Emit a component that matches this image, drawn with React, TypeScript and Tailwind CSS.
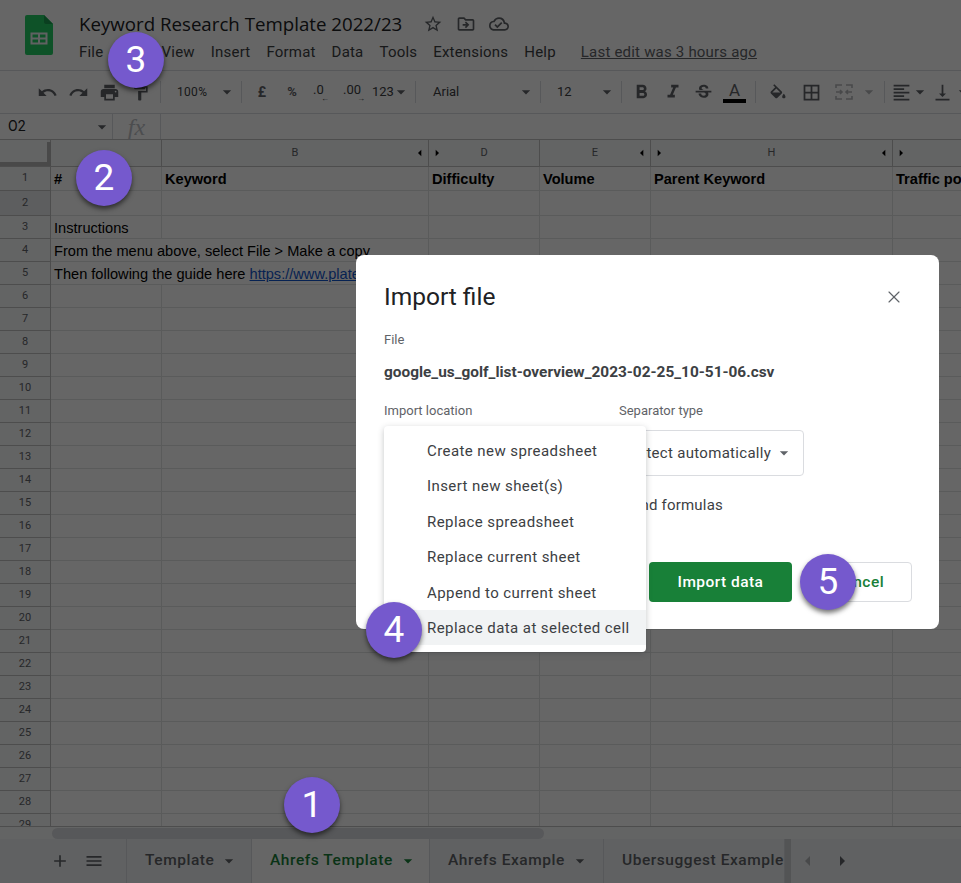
import type { ReactNode } from "react";
import { X } from "lucide-react";
import {
  MdAdd,
  MdArrowDropDown,
  MdArrowLeft,
  MdArrowRight,
  MdBorderAll,
  MdFormatAlignLeft,
  MdFormatBold,
  MdFormatItalic,
  MdFormatPaint,
  MdMenu,
  MdOutlineCloudDone,
  MdOutlineDriveFileMove,
  MdPrint,
  MdRedo,
  MdStarBorder,
  MdStrikethroughS,
  MdUndo,
  MdVerticalAlignBottom,
} from "react-icons/md";

const menus = ["File", "Edit", "View", "Insert", "Format", "Data", "Tools", "Extensions", "Help"];
const importOptions = [
  "Create new spreadsheet",
  "Insert new sheet(s)",
  "Replace spreadsheet",
  "Replace current sheet",
  "Append to current sheet",
  "Replace data at selected cell",
];
const gridCols = "grid grid-cols-[51px_111px_267px_111px_111px_242px_69px]";
const rowNumbers = Array.from({ length: 24 }, (_, i) => i + 6);

const SheetsLogo = () => (
  <svg width="28" height="40" viewBox="0 0 28 40">
    <path d="M2 0h17l9 9v29a2 2 0 0 1-2 2H2a2 2 0 0 1-2-2V2a2 2 0 0 1 2-2z" fill="#25cd64" />
    <path d="M19 0l9 9h-7a2 2 0 0 1-2-2z" fill="#1b9d50" />
    <path d="M5.5 17.5h17v12h-17zM7.5 19.5v3h5.5v-3zM15 19.5v3h5.5v-3zM7.5 24.5v3h5.5v-3zM15 24.5v3h5.5v-3z" fill="#f1f3f4" fillRule="evenodd" />
  </svg>
);

const MergeIcon = () => (
  <svg width="18" height="18" viewBox="0 0 18 18" fill="none" stroke="#b5b7ba" strokeWidth="1.6">
    <path d="M1 5V2h6M11 2h6v3M1 13v3h6M11 16h6v-3M1 9h5M17 9h-5M5 7l2 2-2 2M13 7l-2 2 2 2" />
  </svg>
);

const FillIcon = () => (
  <svg width="20" height="17" viewBox="0 0 24 20" fill="currentColor">
    <path d="M16.56 8.94L7.62 0 6.21 1.41l2.38 2.38-5.15 5.15c-.59.59-.59 1.54 0 2.12l5.5 5.5c.29.29.68.44 1.06.44s.77-.15 1.06-.44l5.5-5.5c.59-.58.59-1.53 0-2.12zM5.21 10L10 5.21 14.79 10H5.21zM19 11.5s-2 2.17-2 3.5c0 1.1.9 2 2 2s2-.9 2-2c0-1.33-2-3.5-2-3.5z" />
  </svg>
);

const Tool = ({ w = "w-[31px]", children }: { w?: string; children: ReactNode }) => (
  <div className={`${w} flex items-center justify-center text-[#5f6368] shrink-0`}>{children}</div>
);

const Sep = () => <div className="w-px h-[22px] bg-[#dadce0] shrink-0" />;

const Caret = ({ className = "" }: { className?: string }) => (
  <MdArrowDropDown size={20} className={`text-[#5f6368] shrink-0 ${className}`} />
);

const Toolbar = () => (
  <div className="h-[43px] flex items-center pl-[32px] border-b border-[#dadce0] bg-white shrink-0 overflow-hidden *:shrink-0 font-['Roboto',sans-serif] text-[12px] text-[#3c4043]">
    <Tool><MdUndo size={21} /></Tool>
    <Tool><MdRedo size={21} /></Tool>
    <Tool><MdPrint size={21} /></Tool>
    <Tool><MdFormatPaint size={19} /></Tool>
    <div className="w-[4px]" />
    <Sep />
    <div className="w-[80px] flex items-center pl-[16px]">
      <span className="tracking-[0.3px]">100%</span>
      <Caret className="ml-auto mr-[4px]" />
    </div>
    <Sep />
    <div className="w-[40px] text-center font-bold text-[14px] text-[#5f6368]">£</div>
    <div className="w-[20px] text-center font-bold text-[13px] text-[#5f6368]">%</div>
    <div className="w-[34px] pl-[11px] text-[13px] leading-none">
      .0
      <div className="text-[8px] leading-[6px] pl-[8px]">←</div>
    </div>
    <div className="w-[30px] pl-[7px] text-[13px] leading-none">
      .00
      <div className="text-[8px] leading-[6px] pl-[14px]">→</div>
    </div>
    <div className="w-[43px] flex items-center pl-[6px] text-[13px]">
      <span>123</span>
      <Caret className="-ml-[3px]" />
    </div>
    <div className="w-[6px]" />
    <Sep />
    <div className="w-[124px] flex items-center pl-[17px] text-[13px]">
      <span>Arial</span>
      <Caret className="ml-auto mr-[4px]" />
    </div>
    <Sep />
    <div className="w-[80px] flex items-center pl-[16px] text-[13px]">
      <span>12</span>
      <Caret className="ml-auto mr-[4px]" />
    </div>
    <Sep />
    <div className="w-[4px]" />
    <Tool><MdFormatBold size={23} /></Tool>
    <Tool><MdFormatItalic size={22} /></Tool>
    <Tool><MdStrikethroughS size={21} /></Tool>
    <div className="w-[31px] flex flex-col items-center">
      <span className="text-[17px] leading-[18px] text-[#5f6368]">A</span>
      <div className="w-[23px] h-[4px] bg-black" />
    </div>
    <div className="w-[5px]" />
    <Sep />
    <div className="w-[4px]" />
    <Tool w="w-[36px]"><FillIcon /></Tool>
    <Tool><MdBorderAll size={21} /></Tool>
    <Tool w="w-[34px]"><MergeIcon /></Tool>
    <Caret className="!text-[#b5b7ba] -ml-[2px]" />
    <div className="w-[5px]" />
    <Sep />
    <div className="w-[4px]" />
    <Tool w="w-[24px]"><MdFormatAlignLeft size={21} /></Tool>
    <Caret className="-ml-[3px]" />
    <Tool w="w-[24px]"><MdVerticalAlignBottom size={21} /></Tool>
    <Caret className="-ml-[1px]" />
  </div>
);

const ColHead = ({ label, left, right }: { label: string; left?: boolean; right?: boolean }) => (
  <div className="relative flex items-center justify-center border-r border-[#c0c0c0] text-[11px] text-[#5f6368] font-['Roboto',sans-serif]">
    {left && <MdArrowRight size={16} className="absolute left-0 text-black" />}
    {label}
    {right && <MdArrowLeft size={16} className="absolute right-0 text-black" />}
  </div>
);

const RowNum = ({ n, active }: { n: number; active?: boolean }) => (
  <div className={`flex items-center justify-center border-r border-b border-[#c0c0c0] text-[11px] text-[#5f6368] font-['Roboto',sans-serif] ${active ? "bg-[#e8eaed]" : "bg-[#f8f9fa]"}`}>
    {n}
  </div>
);

const Cell = ({ children, bold, span }: { children?: ReactNode; bold?: boolean; span?: string }) => (
  <div className={`flex items-center pl-[3px] border-r border-b border-[#e2e3e3] whitespace-nowrap overflow-hidden text-[14.6px] text-black font-['Liberation_Sans',sans-serif] ${bold ? "font-bold pt-[2px]" : "pt-[4px]"} ${span ?? ""}`}>
    {children}
  </div>
);

const emptyCells = (count: number) => Array.from({ length: count }, (_, i) => <Cell key={i} />);

const Grid = () => (
  <div className="flex-1 overflow-hidden bg-white">
    <div className={`${gridCols} h-[27px] bg-[#f8f9fa] border-b border-[#c0c0c0] relative`}>
      <div className="border-r border-[#c0c0c0] relative">
        <div className="absolute right-[-1px] top-[2px] bottom-0 w-[4px] bg-[#b7b7b7]" />
        <div className="absolute left-0 right-[-1px] bottom-0 h-[4px] bg-[#b7b7b7]" />
      </div>
      <div className="border-r border-[#c0c0c0]" />
      <ColHead label="B" right />
      <ColHead label="D" left />
      <ColHead label="E" right />
      <ColHead label="H" left right />
      <div className="relative">
        <MdArrowRight size={16} className="absolute left-0 top-[5px] text-black" />
      </div>
    </div>
    <div className={`${gridCols} h-[24px]`}>
      <RowNum n={1} />
      <Cell bold>#</Cell>
      <Cell bold>Keyword</Cell>
      <Cell bold>Difficulty</Cell>
      <Cell bold>Volume</Cell>
      <Cell bold>Parent Keyword</Cell>
      <Cell bold>Traffic potential</Cell>
    </div>
    <div className={`${gridCols} h-[25px]`}>
      <RowNum n={2} active />
      {emptyCells(6)}
    </div>
    <div className={`${gridCols} h-[23px]`}>
      <RowNum n={3} />
      <Cell>Instructions</Cell>
      {emptyCells(5)}
    </div>
    <div className={`${gridCols} h-[23px]`}>
      <RowNum n={4} />
      <Cell span="col-span-2">From the menu above, select File &gt; Make a copy</Cell>
      {emptyCells(4)}
    </div>
    <div className={`${gridCols} h-[23px]`}>
      <RowNum n={5} />
      <Cell span="col-span-2">
        Then following the guide here&nbsp;<span className="text-[#1155cc] underline">https://www.plate</span>
      </Cell>
      {emptyCells(4)}
    </div>
    {rowNumbers.map((n) => (
      <div key={n} className={`${gridCols} h-[23px]`}>
        <RowNum n={n} />
        {emptyCells(6)}
      </div>
    ))}
  </div>
);

const TabItem = ({ label, active, caret = true, w }: { label: string; active?: boolean; caret?: boolean; w: string }) => (
  <div className={`${w} h-full flex items-center pl-[18px] shrink-0 border-r border-[#dadce0] overflow-hidden text-[15.5px] font-medium tracking-[0.55px] whitespace-nowrap ${active ? "bg-white text-[#188038]" : "text-[#5f6368]"}`}>
    <span>{label}</span>
    {caret && <MdArrowDropDown size={20} className="ml-[5px] shrink-0" />}
  </div>
);

const TabBar = () => (
  <div className="h-[44px] flex bg-[#f1f3f4] shrink-0 font-['Roboto',sans-serif]">
    <div className="w-[127px] flex items-center pl-[50px] gap-[14px] text-[#5f6368] shrink-0 border-r border-[#dadce0]">
      <MdAdd size={20} />
      <MdMenu size={20} />
    </div>
    <TabItem label="Template" w="w-[125px]" />
    <TabItem label="Ahrefs Template" active w="w-[178px]" />
    <TabItem label="Ahrefs Example" w="w-[174px]" />
    <TabItem label="Ubersuggest Example" caret={false} w="w-[181px]" />
    <div className="w-[6px] bg-[#d0d2d4] shrink-0" />
    <div className="flex items-center pl-[5px] gap-[10px]">
      <MdArrowLeft size={24} className="text-[#b5b7ba]" />
      <MdArrowRight size={24} className="text-[#5f6368]" />
    </div>
  </div>
);

const ImportDialog = () => (
  <div className="absolute left-[356px] top-[255px] w-[583px] h-[374px] bg-white rounded-[8px] pt-[26px] px-[28px] font-['Roboto',sans-serif]">
    <div className="flex items-center justify-between">
      <h2 className="text-[24.5px] leading-[32px] text-[#202124]">Import file</h2>
      <X size={20} strokeWidth={1.4} className="text-[#5f6368] mr-[7px]" />
    </div>
    <div className="mt-[19px] text-[13px] leading-[16px] text-[#5f6368]">File</div>
    <div className="mt-[14px] text-[15.4px] leading-[20px] font-bold text-[#3c4043]">google_us_golf_list-overview_2023-02-25_10-51-06.csv</div>
    <div className="mt-[21px] flex">
      <div className="w-[235px] text-[13px] leading-[16px] text-[#5f6368]">Import location</div>
      <div>
        <div className="text-[13px] leading-[16px] text-[#5f6368]">Separator type</div>
        <div className="mt-[11px] w-[185px] h-[46px] flex items-center pl-[8px] border border-[#dadce0] rounded-[4px] text-[15px] text-[#3c4043] tracking-[0.3px]">
          <span>Detect automatically</span>
          <Caret className="ml-[3px]" />
        </div>
        <div className="mt-[19px] text-[15px] leading-[20px] text-[#3c4043] whitespace-nowrap flex justify-end w-[104px] tracking-[0.2px]">
          <span>Convert text to numbers, dates, and formulas</span>
        </div>
      </div>
    </div>
    <div className="absolute right-[27px] top-[307px] flex gap-[14px]">
      <button className="w-[143px] h-[40px] pt-[1px] rounded-[4px] bg-[#188038] text-white text-[15.5px] font-medium tracking-[0.45px]">Import data</button>
      <button className="w-[106px] h-[40px] pt-[1px] rounded-[4px] bg-white border border-[#dadce0] text-[#188038] text-[15.5px] font-medium tracking-[0.45px]">Cancel</button>
    </div>
    <div className="absolute left-[28px] top-[171px] w-[262px] h-[226px] bg-white rounded-[4px] shadow-[0_2px_6px_rgba(60,64,67,0.3)] pt-[7px]">
      {importOptions.map((option, i) => (
        <div key={option} className={`h-[35.4px] flex items-center pl-[43px] pt-[1px] text-[15px] text-[#3c4043] tracking-[0.42px] ${i === 5 ? "bg-[#f1f3f4]" : ""}`}>
          {option}
        </div>
      ))}
    </div>
  </div>
);

const Badge = ({ n, pos }: { n: number; pos: string }) => (
  <div className={`absolute ${pos} w-[56px] h-[56px] rounded-full bg-[#7559cd] text-white flex items-center justify-center text-[37px] font-['Roboto',sans-serif] shadow-[0_3px_5px_rgba(0,0,0,0.55)]`}>
    {n}
  </div>
);

const App = () => {
  return (
    <div className="relative w-[961px] h-[883px] overflow-hidden flex flex-col bg-white">
      <header className="h-[71px] flex border-b border-[#dadce0] shrink-0 font-['Roboto',sans-serif]">
        <div className="w-[79px] pl-[25px] pt-[15px] shrink-0">
          <SheetsLogo />
        </div>
        <div className="pt-[11px]">
          <div className="flex items-center h-[26px]">
            <span className="text-[18.7px] leading-[24px] text-[#202124] font-['Open_Sans',sans-serif]">Keyword Research Template 2022/23</span>
            <div className="flex items-center gap-[13px] ml-[21px] text-[#5f6368]">
              <MdStarBorder size={20} />
              <MdOutlineDriveFileMove size={20} />
              <MdOutlineCloudDone size={20} />
            </div>
          </div>
          <div className="flex items-center gap-[16px] mt-[3px] text-[15px] leading-[24px] text-[#3c4043] tracking-[0.2px]">
            {menus.map((m) => (
              <span key={m}>{m}</span>
            ))}
            <span className="ml-[9px] text-[#5f6368] underline">Last edit was 3 hours ago</span>
          </div>
        </div>
      </header>
      <Toolbar />
      <div className="h-[26px] flex items-center border-b border-[#c0c0c0] shrink-0 font-['Roboto',sans-serif]">
        <div className="w-[113px] flex items-center pl-[8px] h-full border-r border-[#dadce0] text-[14px] text-[#202124]">
          O2
          <Caret className="ml-auto" />
        </div>
        <div className="w-[48px] h-full flex items-center justify-center border-r border-[#dadce0] italic text-[24px] text-[#bdc1c6] font-['Liberation_Serif',serif]">fx</div>
      </div>
      <Grid />
      <div className="h-[13px] flex items-center bg-[#f8f9fa] border-t border-[#c0c0c0] shrink-0 pl-[52px]">
        <div className="w-[492px] h-[11px] rounded-full bg-[#dadce0]" />
      </div>
      <TabBar />
      <div className="absolute inset-0 bg-black/60" />
      <ImportDialog />
      <Badge n={3} pos="left-[108px] top-[32px]" />
      <Badge n={2} pos="left-[76px] top-[150px]" />
      <Badge n={1} pos="left-[284px] top-[777px]" />
      <Badge n={4} pos="left-[366px] top-[602px]" />
      <Badge n={5} pos="left-[800px] top-[554px]" />
    </div>
  );
};

export default App;
